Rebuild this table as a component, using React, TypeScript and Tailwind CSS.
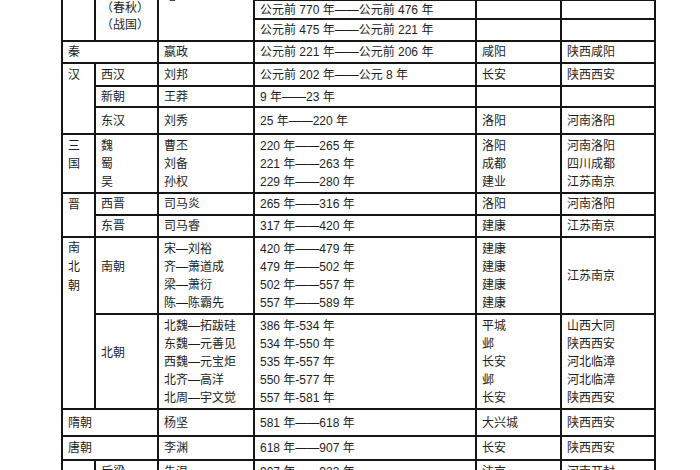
import React from "react";
import { twMerge } from "tailwind-merge";

type CellProps = {
  lines?: string[];
  className?: string;
};

// one table cell: white box on the dark grid background, lines stacked
function Cell({ lines = [], className }: CellProps) {
  return (
    <div
      className={twMerge(
        "bg-white pl-[5px] flex flex-col justify-center leading-[18px] overflow-hidden whitespace-nowrap",
        className
      )}
    >
      {lines.map((l, i) => (
        <div key={i}>{l || "\u00a0"}</div>
      ))}
    </div>
  );
}

function Row({ c3, c4, c5, c6 }: { c3: string[]; c4: string[]; c5: string[]; c6: string[] }) {
  return (
    <>
      <Cell lines={c3} />
      <Cell lines={c4} />
      <Cell lines={c5} />
      <Cell lines={c6} />
    </>
  );
}

export default function App() {
  return (
    <div className="min-h-[470px] bg-white overflow-hidden">
      <div className="-mt-[50px] ml-[61px] w-[595px] p-[2px] bg-[#161616] grid gap-[2px] grid-cols-[31px_61px_94px_220px_83px_92px] grid-rows-[25px_20px_17px_20px_20px_21px_19px_25px_57px_20px_20px_75px_93px_25px_22px_22px] auto-rows-[22px] text-[12px] text-[#1e1e1e] font-['Liberation_Sans','Noto_Sans_CJK_SC',sans-serif]">
        {/* 周 */}
        <Cell lines={["周"]} className="row-span-4 justify-start pt-[2px]" />
        <Cell lines={["东周", "（春秋）", "（战国）"]} className="row-span-4 justify-end pb-[6px] leading-[17px]" />
        <Cell lines={["略"]} className="row-span-4" />
        <Cell lines={["公元前 1046 年——公元前 771 年"]} />
        <Cell lines={["镐京"]} />
        <Cell lines={["陕西西安"]} />
        <Cell lines={["公元前 770 年——公元前 256 年"]} />
        <Cell lines={["洛邑"]} />
        <Cell lines={["河南洛阳"]} />
        <Cell lines={["公元前 770 年——公元前 476 年"]} />
        <Cell />
        <Cell />
        <Cell lines={["公元前 475 年——公元前 221 年"]} />
        <Cell />
        <Cell />

        {/* 秦 */}
        <Cell lines={["秦"]} className="col-span-2" />
        <Row c3={["嬴政"]} c4={["公元前 221 年——公元前 206 年"]} c5={["咸阳"]} c6={["陕西咸阳"]} />

        {/* 汉 */}
        <Cell lines={["汉"]} className="row-span-3 justify-start pt-[2px]" />
        <Cell lines={["西汉"]} />
        <Row c3={["刘邦"]} c4={["公元前 202 年——公元 8 年"]} c5={["长安"]} c6={["陕西西安"]} />
        <Cell lines={["新朝"]} />
        <Row c3={["王莽"]} c4={["9 年——23 年"]} c5={[]} c6={[]} />
        <Cell lines={["东汉"]} />
        <Row c3={["刘秀"]} c4={["25 年——220 年"]} c5={["洛阳"]} c6={["河南洛阳"]} />

        {/* 三国 */}
        <Cell lines={["三", "国"]} className="justify-start pt-[2px]" />
        <Cell lines={["魏", "蜀", "吴"]} />
        <Row
          c3={["曹丕", "刘备", "孙权"]}
          c4={["220 年——265 年", "221 年——263 年", "229 年——280 年"]}
          c5={["洛阳", "成都", "建业"]}
          c6={["河南洛阳", "四川成都", "江苏南京"]}
        />

        {/* 晋 */}
        <Cell lines={["晋"]} className="row-span-2 justify-start pt-[2px]" />
        <Cell lines={["西晋"]} />
        <Row c3={["司马炎"]} c4={["265 年——316 年"]} c5={["洛阳"]} c6={["河南洛阳"]} />
        <Cell lines={["东晋"]} />
        <Row c3={["司马睿"]} c4={["317 年——420 年"]} c5={["建康"]} c6={["江苏南京"]} />

        {/* 南北朝 */}
        <Cell lines={["南", "北", "朝"]} className="row-span-2 justify-start pt-[1px] leading-[19px]" />
        <Cell lines={["南朝", ""]} />
        <Row
          c3={["宋—刘裕", "齐—萧道成", "梁—萧衍", "陈—陈霸先"]}
          c4={["420 年——479 年", "479 年——502 年", "502 年——557 年", "557 年——589 年"]}
          c5={["建康", "建康", "建康", "建康"]}
          c6={["江苏南京"]}
        />
        <Cell lines={["北朝", ""]} />
        <Row
          c3={["北魏—拓跋硅", "东魏—元善见", "西魏—元宝炬", "北齐—高洋", "北周—宇文觉"]}
          c4={["386 年-534 年", "534 年-550 年", "535 年-557 年", "550 年-577 年", "557 年-581 年"]}
          c5={["平城", "邺", "长安", "邺", "长安"]}
          c6={["山西大同", "陕西西安", "河北临漳", "河北临漳", "陕西西安"]}
        />

        {/* 隋 唐 */}
        <Cell lines={["隋朝"]} className="col-span-2" />
        <Row c3={["杨坚"]} c4={["581 年——618 年"]} c5={["大兴城"]} c6={["陕西西安"]} />
        <Cell lines={["唐朝"]} className="col-span-2" />
        <Row c3={["李渊"]} c4={["618 年——907 年"]} c5={["长安"]} c6={["陕西西安"]} />

        {/* 五代 */}
        <Cell lines={["五", "代"]} className="row-span-5" />
        <Cell lines={["后梁"]} />
        <Row c3={["朱温"]} c4={["907 年——923 年"]} c5={["汴京"]} c6={["河南开封"]} />
        <Cell lines={["后唐"]} />
        <Row c3={["李存勖"]} c4={["923 年——936 年"]} c5={["洛阳"]} c6={["河南洛阳"]} />
        <Cell lines={["后晋"]} />
        <Row c3={["石敬瑭"]} c4={["936 年——947 年"]} c5={["汴京"]} c6={["河南开封"]} />
        <Cell lines={["后汉"]} />
        <Row c3={["刘知远"]} c4={["947 年——950 年"]} c5={["汴京"]} c6={["河南开封"]} />
        <Cell lines={["后周"]} />
        <Row c3={["郭威"]} c4={["951 年——960 年"]} c5={["汴京"]} c6={["河南开封"]} />
      </div>
    </div>
  );
}
